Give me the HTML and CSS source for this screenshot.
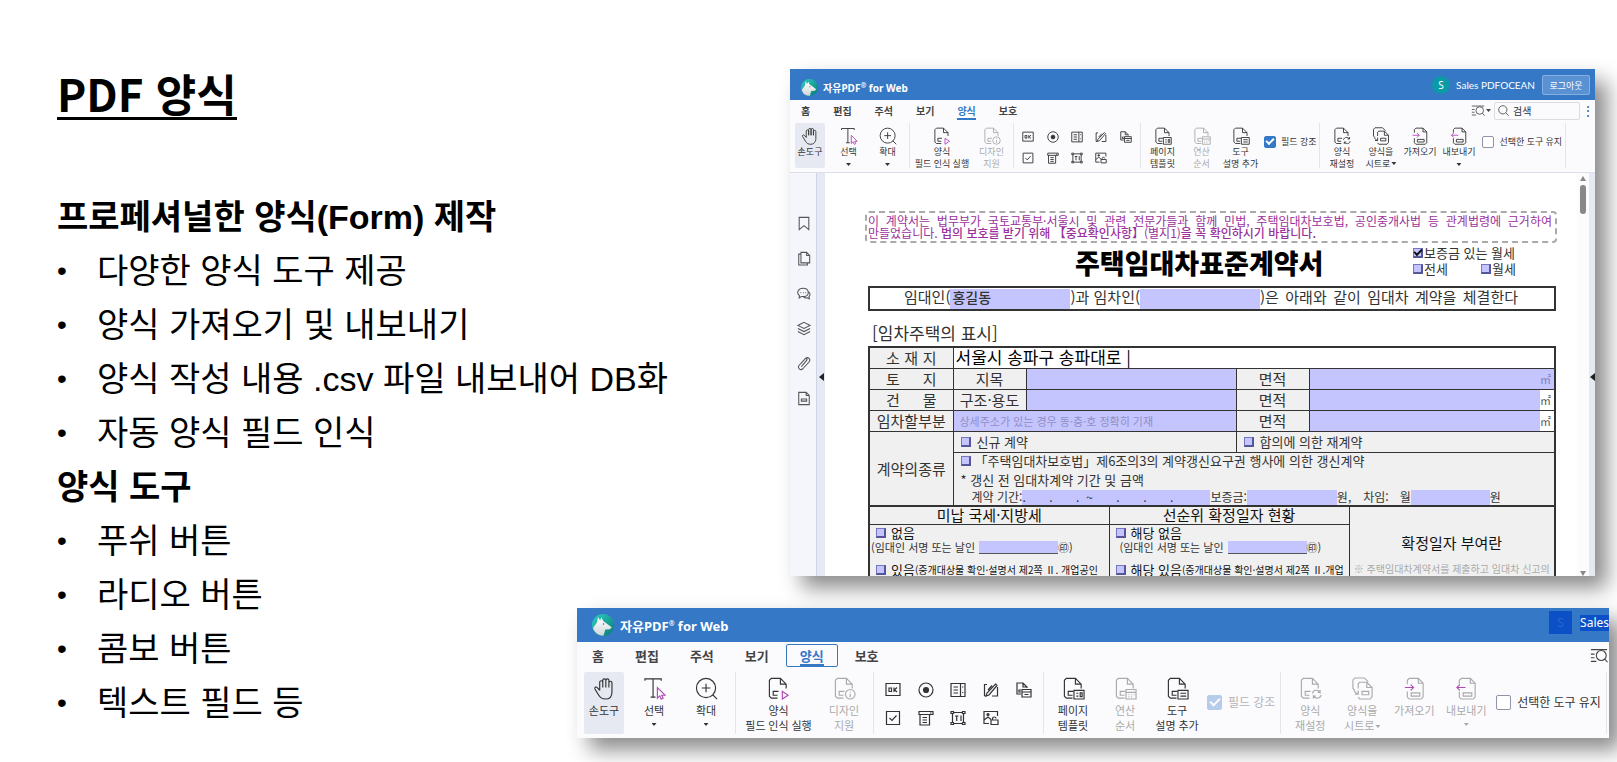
FILE: index.html
```html
<!DOCTYPE html>
<html lang="ko">
<head>
    <meta charset="UTF-8">
    <meta name="viewport" content="width=device-width, initial-scale=1.0">
    <title>PDF 양식</title>
    <link rel="stylesheet" href="styles.css">
</head>
<body>
    <!-- icon set -->
    <svg class="sprite" aria-hidden="true">
        <defs>
            <linearGradient id="teal" x1="0" y1="0" x2="1" y2="1">
                <stop offset="0" stop-color="#2fd0c4"/><stop offset="1" stop-color="#067a72"/>
            </linearGradient>
            <linearGradient id="fur" x1="0" y1="0" x2="0" y2="1">
                <stop offset="0" stop-color="#fff"/><stop offset="1" stop-color="#cfd6da"/>
            </linearGradient>
        </defs>
        <symbol id="logo" viewBox="0 0 24 24">
            <circle cx="12" cy="12" r="12" fill="url(#teal)"/>
            <path d="M6.500 3.500 9 7l1-3.500L12.500 8l3 2 6 4.500-2 2-5 .5-2 6.800A12 12 0 0 1 1 15.500L5.500 9z" fill="url(#fur)"/>
            <circle cx="12.500" cy="11" r=".8" fill="#456"/>
        </symbol>
        <symbol id="hand" viewBox="0 0 24 24"><path d="M7 14V5.500a1.600 1.600 0 0 1 3.200 0V11 3.500a1.600 1.600 0 0 1 3.200 0V11 3.500a1.600 1.600 0 0 1 3.200 0V11 6a1.600 1.600 0 0 1 3.200 0v9c0 5-2.500 8-6.800 8C9 23 7.500 21.500 6 19l-4-6.500c-.6-2 1.500-2.700 2.700-1.200L7 14"/></symbol>
        <symbol id="text-select" viewBox="0 0 24 24"><path d="M2 4V2h17v2M10.500 2v19M8 21h5"/><path class="pink" d="M15 11v11l2.500-2.300 1.500 3.500 2-1-1.500-3.200H23z"/></symbol>
        <symbol id="zoom" viewBox="0 0 24 24"><circle cx="11.500" cy="11.500" r="10"/><path d="M11.500 7v9M7 11.500h9M18.500 18.500 23 23"/></symbol>
        <symbol id="page" viewBox="0 0 24 24"><path d="M11 22H4.500L2.500 20V3.500l2-2H14l6 6V12M14 1.500V7.500h6M12 15H6.500v4H11"/></symbol>
        <symbol id="recog" viewBox="0 0 24 24"><use href="#page"/><path class="pink" d="M16 15v8l6-4z"/></symbol>
        <symbol id="design" viewBox="0 0 24 24"><use href="#page"/><circle cx="18" cy="18" r="5"/><path d="M18 17.500v3.500M18 15v1"/></symbol>
        <symbol id="template" viewBox="0 0 24 24"><use href="#page"/><path d="M12.500 14H23v9H12.500zM15 17h2M15 20h2M19 16.500h2v4h-2z"/></symbol>
        <symbol id="order" viewBox="0 0 24 24"><use href="#page"/><path d="M12.500 13H23v10H12.500zM12.500 16H23M15 18.500h1M18 18.500h1M20.500 18.500h1M15 20.800h1M18 20.800h1"/></symbol>
        <symbol id="tip" viewBox="0 0 24 24"><use href="#page"/><path d="M12.500 14H23v9H12.500zM15 17h6M15 20h6"/></symbol>
        <symbol id="reset" viewBox="0 0 24 24"><use href="#page"/><path d="M14 17c1-4 6-4 8-1v-2.500M22 16h-2.500M23 19c-1 4-6 4-8 1v2.500M15 20h2.500"/></symbol>
        <symbol id="sheet" viewBox="0 0 24 24"><path d="M9 5.500h7.500L22 11v9.500L20 23H9l-1.500-2M7.500 12V7L9 5.500M16.500 5.500V11H22M4 14l-2-2V3l2-2h10l4 4M3 14c1 2 2 3 4.500 4M4 18h3.500v-4M11.500 15h7v3.500h-7z"/></symbol>
        <symbol id="import" viewBox="0 0 24 24"><path d="M4.500 7.500v-4l2-2H16l5 5V21l-2 2H6.500l-2-2v-6M16 1.500v5h5M8.500 16.500h9V20h-9z"/><path class="pink" d="M2 11h9M8 8l3 3-3 3"/></symbol>
        <symbol id="export" viewBox="0 0 24 24"><path d="M4.500 7.500v-4l2-2H16l5 5V21l-2 2H6.500l-2-2v-6M16 1.500v5h5M8.500 16.500h9V20h-9z"/><path class="pink" d="M2 11h9M5 8l-3 3 3 3"/></symbol>
        <symbol id="f-ok" viewBox="0 0 16 16"><path d="M1 1.500h14v12H1zM4 6h2.500v3.500H4zM9 5.500V10M12 5.500 9.500 7.700 12 10"/></symbol>
        <symbol id="f-radio" viewBox="0 0 16 16"><circle cx="8" cy="8" r="7"/><circle class="solid" cx="8" cy="8" r="2.500"/></symbol>
        <symbol id="f-list" viewBox="0 0 16 16"><path d="M1 1.500h14v13H1zM10.500 1.500v13M3.500 5H8M3.500 8H8M3.500 11H8M12.700 4.500v1M12.700 10v1"/></symbol>
        <symbol id="f-sign" viewBox="0 0 16 16"><path d="M4 2.500H1.500V14M1.500 14H3M12.500 2l1.500 1.500L6 13l-3 1 1-3zM14.500 5v9H9M9 3.500 5 8"/></symbol>
        <symbol id="f-date" viewBox="0 0 16 16"><path d="M5 12H1V1h6l4 4v1M7 1v4h4M5 8H3v2h2M6 7.500h9V15H6zM6 10h9M8.500 12.500h4"/></symbol>
        <symbol id="f-check" viewBox="0 0 16 16"><path d="M1.500 1.500h13v13h-13zM4.500 8l2.500 2.500 4.500-5"/></symbol>
        <symbol id="f-combo" viewBox="0 0 16 16"><path d="M1 1.500h14v3H1zM2 4.500V15h9.500V4.500M4.500 7.500H9M4.500 10H9M4.500 12.500H9M12 3h1.500"/></symbol>
        <symbol id="f-text" viewBox="0 0 16 16"><path d="M2.500 3.500v9M13.500 3.500v9M4 2.500h8M4 13.500h8M1 1.500h2.500v2H1zM12.500 1.500H15v2h-2.500zM1 12.500h2.500v2H1zM12.500 12.500H15v2h-2.500zM5 6h3.500M6.700 6v5M11 5.500V11"/></symbol>
        <symbol id="f-image" viewBox="0 0 16 16"><path d="M6 13.500H1v-12h13.500V6M1 10l4-3 3 2.500M8 14.500V10h7v4.500zM9.500 10V8.500c0-2 3.500-2 3.500 0"/><circle class="solid" cx="5" cy="4.500" r="1"/></symbol>
        <symbol id="find" viewBox="0 0 20 16"><path d="M1 1.500h18M1 6.500h4M1 10.500h4M1 14.500h6"/><circle cx="12.500" cy="8" r="5.500"/><path d="m16.500 12 3 3.500"/></symbol>
        <symbol id="lens" viewBox="0 0 16 16"><circle cx="7" cy="7" r="6"/><path d="m11.500 11.500 4 4"/></symbol>
        <symbol id="s-mark" viewBox="0 0 16 16"><path d="M2.500 1h11v14L8 10.500 2.500 15z"/></symbol>
        <symbol id="s-pages" viewBox="0 0 16 16"><path d="M4.500 1H11l3.500 3.500V13h-10zM11 1v3.500h3.500M4.500 3H2v12.500h10V13"/></symbol>
        <symbol id="s-chat" viewBox="0 0 16 16"><path d="M7 2c7 0 8 8 1.500 9.500H5L2.500 13l.3-2.500C-1 7.500 1 2 7 2zM13.500 6c2 2 1.500 4.500.2 5.500l.5 2.500-2.500-1.200c-1.500.5-3 .2-4.200-.8M4 7h.8M6.800 7h.8M9.600 7h.8"/></symbol>
        <symbol id="s-layers" viewBox="0 0 16 16"><path d="m8 1 7 3.500L8 8 1 4.500zM1 8l7 3.500L15 8M1 11.500 8 15l7-3.500"/></symbol>
        <symbol id="s-clip" viewBox="0 0 16 16"><path d="m5 11.500 6-7c1.500-1.500-.5-3-1.800-1.800L2.500 10c-2.500 3 1.500 6.500 4.200 4L14 6c2-3-1.500-6-4-4L4 8.500"/></symbol>
        <symbol id="s-form" viewBox="0 0 16 16"><path d="M2 1h8.500L14 4.500V15H2zM10.500 1v3.500H14M5 8.500h6V11H5z"/></symbol>
    </svg>

    <main class="slide">
        <section class="text">
            <h1>PDF 양식</h1>
            <h2>프로페셔널한 양식(Form) 제작</h2>
            <ul>
                <li>다양한 양식 도구 제공</li>
                <li>양식 가져오기 및 내보내기</li>
                <li>양식 작성 내용 .csv 파일 내보내어 DB화</li>
                <li>자동 양식 필드 인식</li>
            </ul>
            <h2>양식 도구</h2>
            <ul>
                <li>푸쉬 버튼</li>
                <li>라디오 버튼</li>
                <li>콤보 버튼</li>
                <li>텍스트 필드 등</li>
            </ul>
        </section>

        <!-- full editor window -->
        <section class="window editor">
            <header class="titlebar">
                <svg class="logo"><use href="#logo"/></svg>
                <span class="brand">자유PDF<sup>®</sup> for Web</span>
                <div class="account">
                    <span class="avatar">S</span>
                    <span class="user">Sales PDFOCEAN</span>
                    <button class="logout">로그아웃</button>
                </div>
            </header>
            <nav class="tabs">
                <button>홈</button>
                <button>편집</button>
                <button>주석</button>
                <button>보기</button>
                <button class="active">양식</button>
                <button>보호</button>
                <div class="finder">
                    <button class="find" aria-label="찾기"><svg><use href="#find"/></svg><i class="caret"></i></button>
                    <label class="search"><svg><use href="#lens"/></svg><input type="text" placeholder="검색" aria-label="검색"></label>
                    <button class="more" aria-label="더보기">⋮</button>
                </div>
            </nav>
            <div class="ribbon">
                <div class="group">
                    <button class="tool hand"><svg><use href="#hand"/></svg><span>손도구</span></button>
                    <button class="tool"><svg><use href="#text-select"/></svg><span>선택</span><i class="caret"></i></button>
                    <button class="tool"><svg><use href="#zoom"/></svg><span>확대</span><i class="caret"></i></button>
                </div>
                <div class="group">
                    <button class="tool wide"><svg><use href="#recog"/></svg><span>양식</span><span>필드 인식 실행</span></button>
                    <button class="tool" disabled><svg><use href="#design"/></svg><span>디자인</span><span>지원</span></button>
                </div>
                <div class="group">
                    <div class="fields">
                        <button aria-label="푸시 버튼"><svg><use href="#f-ok"/></svg></button>
                        <button aria-label="라디오 버튼"><svg><use href="#f-radio"/></svg></button>
                        <button aria-label="목록 상자"><svg><use href="#f-list"/></svg></button>
                        <button aria-label="서명"><svg><use href="#f-sign"/></svg></button>
                        <button aria-label="날짜"><svg><use href="#f-date"/></svg></button>
                        <button aria-label="체크 상자"><svg><use href="#f-check"/></svg></button>
                        <button aria-label="콤보 상자"><svg><use href="#f-combo"/></svg></button>
                        <button aria-label="텍스트 필드"><svg><use href="#f-text"/></svg></button>
                        <button aria-label="이미지"><svg><use href="#f-image"/></svg></button>
                    </div>
                </div>
                <div class="group">
                    <button class="tool"><svg><use href="#template"/></svg><span>페이지</span><span>템플릿</span></button>
                    <button class="tool" disabled><svg><use href="#order"/></svg><span>연산</span><span>순서</span></button>
                    <button class="tool"><svg><use href="#tip"/></svg><span>도구</span><span>설명 추가</span></button>
                    <label class="option"><input type="checkbox" checked>필드 강조</label>
                </div>
                <div class="group">
                    <button class="tool"><svg><use href="#reset"/></svg><span>양식</span><span>재설정</span></button>
                    <button class="tool"><svg><use href="#sheet"/></svg><span>양식을</span><span>시트로<i class="caret"></i></span></button>
                    <button class="tool"><svg><use href="#import"/></svg><span>가져오기</span></button>
                    <button class="tool"><svg><use href="#export"/></svg><span>내보내기</span><i class="caret"></i></button>
                    <label class="option"><input type="checkbox">선택한 도구 유지</label>
                </div>
            </div>
            <div class="workspace">
                <aside class="sidebar">
                    <button aria-label="책갈피"><svg><use href="#s-mark"/></svg></button>
                    <button aria-label="페이지"><svg><use href="#s-pages"/></svg></button>
                    <button aria-label="주석"><svg><use href="#s-chat"/></svg></button>
                    <button aria-label="레이어"><svg><use href="#s-layers"/></svg></button>
                    <button aria-label="첨부"><svg><use href="#s-clip"/></svg></button>
                    <button aria-label="양식"><svg><use href="#s-form"/></svg></button>
                </aside>
                <div class="splitter"><i></i></div>
                <article class="paper">
                    <div class="notice">
                        <p class="fill">이 계약서는 법무부가 국토교통부·서울시 및 관련 전문가들과 함께 민법, 주택임대차보호법, 공인중개사법 등 관계법령에 근거하여</p>
                        <p>만들었습니다. <b>법의 보호를 받기 위해 【중요확인사항】</b>(별지1)<b>을 꼭 확인하시기 바랍니다.</b></p>
                    </div>
                    <div class="heading">
                        <h3>주택임대차표준계약서</h3>
                        <div class="kinds">
                            <label><input type="checkbox" checked>보증금 있는 월세</label>
                            <div>
                                <label><input type="checkbox">전세</label>
                                <label><input type="checkbox">월세</label>
                            </div>
                        </div>
                    </div>
                    <div class="parties">
                        <span>임대인(</span><input class="name" type="text" value="홍길동" aria-label="임대인">
                        <span>)과 임차인(</span><input class="name" type="text" aria-label="임차인">
                        <span class="fill">)은 아래와 같이 임대차 계약을 체결한다</span>
                    </div>
                    <h4>[임차주택의 표시]</h4>
                    <table class="house">
                        <colgroup><col class="c1"><col class="c2"><col><col class="c2"><col class="c5"></colgroup>
                        <tr>
                            <th class="fill spread">소 재 지</th>
                            <td class="white" colspan="4"><input class="address" type="text" value="서울시 송파구 송파대로 |" aria-label="소재지"></td>
                        </tr>
                        <tr>
                            <th class="fill spread">토 지</th>
                            <th>지목</th>
                            <td class="white"><input type="text" aria-label="지목"></td>
                            <th>면적</th>
                            <td><div class="area tinted"><input type="text" aria-label="토지 면적">㎡</div></td>
                        </tr>
                        <tr>
                            <th class="fill spread">건 물</th>
                            <th>구조·용도</th>
                            <td class="white"><input type="text" aria-label="구조·용도"></td>
                            <th>면적</th>
                            <td class="white"><div class="area"><input type="text" aria-label="건물 면적">㎡</div></td>
                        </tr>
                        <tr>
                            <th>임차할부분</th>
                            <td class="white" colspan="2"><input class="part" type="text" placeholder="상세주소가 있는 경우 동·층·호 정확히 기재" aria-label="임차할부분"></td>
                            <th>면적</th>
                            <td class="white"><div class="area"><input type="text" aria-label="임차 면적">㎡</div></td>
                        </tr>
                        <tr>
                            <th rowspan="2">계약의종류</th>
                            <td colspan="2"><label class="pick"><input type="checkbox">신규 계약</label></td>
                            <td colspan="2"><label class="pick"><input type="checkbox">합의에 의한 재계약</label></td>
                        </tr>
                        <tr>
                            <td colspan="4">
                                <div class="renewal">
                                    <label class="pick"><input type="checkbox">「주택임대차보호법」제6조의3의 계약갱신요구권 행사에 의한 갱신계약</label>
                                    <p>* 갱신 전 임대차계약 기간 및 금액</p>
                                    <div class="terms">
                                        <span>계약 기간:</span><input class="period" type="text" value=". &nbsp; &nbsp; &nbsp; . &nbsp; &nbsp; &nbsp; . &nbsp;~ &nbsp; &nbsp; &nbsp; . &nbsp; &nbsp; &nbsp; . &nbsp; &nbsp; &nbsp; ." aria-label="계약 기간">
                                        <span>보증금:</span><input class="deposit" type="text" aria-label="보증금">
                                        <span>원,</span><span class="rent">차임:</span><span class="month">월</span><input class="monthly" type="text" aria-label="차임"><span>원</span>
                                    </div>
                                </div>
                            </td>
                        </tr>
                    </table>
                    <table class="checks">
                        <colgroup><col class="c7"><col class="c7"><col></colgroup>
                        <tr>
                            <th>미납 국세·지방세</th>
                            <th>선순위 확정일자 현황</th>
                            <td class="office" rowspan="2">
                                <p class="office-title">확정일자 부여란</p>
                                <p>※ 주택임대차계약서를 제출하고 임대차 신고의</p>
                            </td>
                        </tr>
                        <tr>
                            <td class="status">
                                <label><input type="checkbox">없음</label>
                                <div class="sign"><span>(임대인 서명 또는 날인</span><input type="text" aria-label="임대인 서명"><span>㊞)</span></div>
                                <label><input type="checkbox">있음<small>(중개대상물 확인·설명서 제2쪽 Ⅱ. 개업공인</small></label>
                            </td>
                            <td class="status">
                                <label><input type="checkbox">해당 없음</label>
                                <div class="sign indent"><span>(임대인 서명 또는 날인</span><input type="text" aria-label="확정일자 서명"><span>㊞)</span></div>
                                <label><input type="checkbox">해당 있음<small>(중개대상물 확인·설명서 제2쪽 Ⅱ.개업</small></label>
                            </td>
                        </tr>
                    </table>
                </article>
                <div class="scrollbar"><i class="up"></i><i class="thumb"></i><i class="down"></i></div>
                <div class="splitter right"><i></i></div>
            </div>
        </section>

        <!-- toolbar close-up -->
        <section class="window closeup">
            <header class="titlebar">
                <svg class="logo"><use href="#logo"/></svg>
                <span class="brand">자유PDF<sup>®</sup> for Web</span>
                <div class="account">
                    <span class="avatar">S</span>
                    <span class="user">Sales</span>
                </div>
            </header>
            <nav class="tabs">
                <button>홈</button>
                <button>편집</button>
                <button>주석</button>
                <button>보기</button>
                <button class="active">양식</button>
                <button>보호</button>
                <div class="finder">
                    <button class="find" aria-label="찾기"><svg><use href="#find"/></svg></button>
                </div>
            </nav>
            <div class="ribbon">
                <div class="group">
                    <button class="tool hand"><svg><use href="#hand"/></svg><span>손도구</span></button>
                    <button class="tool"><svg><use href="#text-select"/></svg><span>선택</span><i class="caret"></i></button>
                    <button class="tool"><svg><use href="#zoom"/></svg><span>확대</span><i class="caret"></i></button>
                </div>
                <div class="group">
                    <button class="tool wide"><svg><use href="#recog"/></svg><span>양식</span><span>필드 인식 실행</span></button>
                    <button class="tool" disabled><svg><use href="#design"/></svg><span>디자인</span><span>지원</span></button>
                </div>
                <div class="group">
                    <div class="fields">
                        <button aria-label="푸시 버튼"><svg><use href="#f-ok"/></svg></button>
                        <button aria-label="라디오 버튼"><svg><use href="#f-radio"/></svg></button>
                        <button aria-label="목록 상자"><svg><use href="#f-list"/></svg></button>
                        <button aria-label="서명"><svg><use href="#f-sign"/></svg></button>
                        <button aria-label="날짜"><svg><use href="#f-date"/></svg></button>
                        <button aria-label="체크 상자"><svg><use href="#f-check"/></svg></button>
                        <button aria-label="콤보 상자"><svg><use href="#f-combo"/></svg></button>
                        <button aria-label="텍스트 필드"><svg><use href="#f-text"/></svg></button>
                        <button aria-label="이미지"><svg><use href="#f-image"/></svg></button>
                    </div>
                </div>
                <div class="group">
                    <button class="tool"><svg><use href="#template"/></svg><span>페이지</span><span>템플릿</span></button>
                    <button class="tool" disabled><svg><use href="#order"/></svg><span>연산</span><span>순서</span></button>
                    <button class="tool"><svg><use href="#tip"/></svg><span>도구</span><span>설명 추가</span></button>
                    <label class="option off"><input type="checkbox" checked disabled>필드 강조</label>
                </div>
                <div class="group">
                    <button class="tool" disabled><svg><use href="#reset"/></svg><span>양식</span><span>재설정</span></button>
                    <button class="tool" disabled><svg><use href="#sheet"/></svg><span>양식을</span><span>시트로<i class="caret"></i></span></button>
                    <button class="tool" disabled><svg><use href="#import"/></svg><span>가져오기</span></button>
                    <button class="tool" disabled><svg><use href="#export"/></svg><span>내보내기</span><i class="caret"></i></button>
                    <label class="option"><input type="checkbox">선택한 도구 유지</label>
                </div>
            </div>
        </section>
    </main>
</body>
</html>
```
FILE: styles.css
```css
* { box-sizing: border-box; }
body { margin: 0; background: #fff; color: #000; font-family: "Noto Sans", "Noto Sans CJK KR", sans-serif; overflow: hidden; }
h1, h2, h3, h4, p, ul { margin: 0; padding: 0; }
button { border: 0; padding: 0; background: none; color: inherit; font: inherit; white-space: nowrap; }
input { font: inherit; color: inherit; min-width: 0; }
svg { display: block; fill: none; stroke: currentColor; stroke-width: 1.2; overflow: visible; }
.sprite { position: absolute; width: 0; height: 0; }
.logo { stroke: none; }
.pink { stroke: #b04ab4; }
.solid { fill: currentColor; }

.slide {
    display: grid;
    grid-template-columns: 577px 213px 1fr;
    grid-template-rows: 507px auto;
    row-gap: 32px;
    min-height: 100vh;
    padding: 69px 8px 24px 0;
    align-items: start;
}

/* left text */
.text { grid-column: 1 / 3; grid-row: 1 / 3; padding: 1px 0 0 57px; font-family: "Liberation Sans", "Noto Sans CJK KR", sans-serif; font-size: 34px; line-height: 54px; }
.text h1 { display: inline-block; margin-bottom: 70px; border-bottom: 3px solid #000; font-family: "Noto Sans CJK KR", sans-serif; font-size: 44px; line-height: 47px; }
.text h2 { font-size: 34px; font-weight: bold; }
.text ul { list-style: none; }
.text li { display: flex; }
.text li::before { content: "•"; width: 40px; font-size: 28px; }

/* window frame, sized by the variables of each window */
.window { position: relative; background: #fbfbfe; color: #333; box-shadow: 12px 12px 20px rgba(0, 0, 0, .46); }
.editor {
    --bar: 31px; --logo: 17px; --brand: 10px; --tab: 10px; --tabs: 21px; --label: 9px; --option: 9px; --line: 12px;
    --icon: 18px; --tool: 39px; --wide: 60px; --hand: 30px; --tool-h: 45px; --gap: 2px; --fields: 122px; --field: 12px; --box: 12px;
    grid-column: 3; grid-row: 1; height: 507px; margin-right: 14px;
    display: flex; flex-direction: column;
}
.closeup {
    --bar: 34px; --logo: 22px; --brand: 13px; --tab: 13px; --tabs: 27px; --label: 11px; --option: 12px; --line: 15px;
    --icon: 23px; --tool: 52px; --wide: 79px; --hand: 40px; --tool-h: 62px; --gap: 3px; --fields: 163px; --field: 16px; --box: 15px;
    grid-column: 2 / 4; grid-row: 2;
}
.titlebar { display: flex; align-items: center; height: var(--bar); padding: 5px 5px 0 11px; background: #3578c6; color: #fff; }
.closeup .titlebar { padding: 0 0 0 15px; }
.logo { width: var(--logo); height: var(--logo); }
.brand { margin-left: 5px; font-size: var(--brand); font-weight: bold; white-space: nowrap; }
.closeup .brand { margin-left: 6px; }
.brand sup { font-size: 7px; line-height: 0; }
.account { display: flex; align-items: center; margin-left: auto; font-size: 10px; }
.editor .account { padding-bottom: 4px; }
.editor .user { font-family: Lato, sans-serif; }
.avatar { width: 18px; height: 18px; margin-right: 6px; border-radius: 50%; background: #0c9aa6; line-height: 18px; text-align: center; }
.logout { width: 48px; height: 20px; margin-left: 7px; border: 1px solid #86aede; border-radius: 2px; background: #5a91d2; font-size: 9px; }
.closeup .account { padding-bottom: 5px; font-size: 12px; }
.closeup .avatar { width: 23px; height: 23px; margin-right: 8px; border-radius: 0; background: #0b50c6; color: #2c63cf; line-height: 23px; }
.closeup .user { background: #0b50c6; line-height: 16px; }

.tabs { display: flex; align-items: center; gap: 3px; height: var(--tabs); padding-left: 1px; flex: none; color: #444; font-size: var(--tab); font-weight: bold; }
.tabs > button { position: relative; height: 20px; padding: 0 10px; }
.closeup .tabs > button { height: 23px; padding: 0 14px; }
.tabs .active { color: #3578c6; }
.closeup .tabs .active { outline: 1px solid #3578c6; outline-offset: -1px; border-radius: 2px; }
.tabs .active::after { content: ""; position: absolute; left: 10px; right: 10px; bottom: 1px; height: 2px; background: #3578c6; }
.closeup .tabs .active::after { left: 14px; right: 14px; }
.finder { display: flex; align-items: center; margin-left: auto; font-weight: normal; }
.find { display: flex; align-items: center; gap: 1px; margin-right: 3px; }
.find svg { width: 14px; height: 11px; }
.closeup .find { margin-right: 1px; }
.closeup .find svg { width: 18px; height: 15px; }
.search { display: flex; align-items: center; width: 86px; height: 18px; padding-left: 3px; border: 1px solid #dcdce2; border-radius: 2px; }
.search svg { width: 11px; height: 11px; }
.search input { width: 60px; padding: 0 0 0 4px; border: 0; background: none; outline: 0; }
.search input::placeholder { color: #333; opacity: 1; }
.more { width: 15px; font-size: 12px; line-height: 12px; }

.caret { display: inline-block; width: 5px; height: 3px; background: currentColor; clip-path: polygon(0 0, 100% 0, 50% 100%); }
span > .caret { margin: 0 0 2px 1px; }
.ribbon { display: flex; flex: none; padding: 2px 0 4px 5px; font-size: var(--label); line-height: var(--line); }
.closeup .ribbon { padding: 3px 0 4px 7px; overflow: hidden; }
.group { display: flex; padding: 0 var(--gap); border-right: 1px solid #e4e5ec; }
.group:first-child { padding-left: 0; }
.tool { display: flex; flex-direction: column; align-items: center; width: var(--tool); height: var(--tool-h); padding-top: 4px; line-height: var(--line); flex: none; }
.tool svg { width: var(--icon); height: var(--icon); margin-bottom: 1px; flex: none; }
.closeup .tool { padding-top: 5px; }
.closeup .tool svg { margin-bottom: 3px; }
.tool > .caret { margin-top: 5px; }
.tool.wide { width: var(--wide); }
.tool.hand { width: var(--hand); margin-right: 4px; border-radius: 2px; background: #e6e9f1; }
.tool:disabled { color: #aaa; }
.tool:disabled .pink { stroke: #d9a0db; }
.fields { display: grid; grid-template-columns: repeat(5, 1fr); align-content: start; width: var(--fields); padding-top: 3px; }
.fields button { display: flex; align-items: center; justify-content: center; height: 21px; }
.closeup .fields { padding-top: 4px; }
.closeup .fields button { height: 28px; }
.fields svg { width: var(--field); height: var(--field); }
.option { display: flex; align-items: center; gap: 5px; padding: 0 1px 0 4px; font-size: var(--option); white-space: nowrap; }
.editor .option { padding-bottom: 8px; }
.closeup .option { padding: 0 2px 1px 4px; gap: 6px; }
.option input { appearance: none; width: var(--box); height: var(--box); margin: 0; border: 1px solid #8f94a8; border-radius: 2px; background: #fff; flex: none; }
.option input:checked { display: flex; align-items: center; justify-content: center; border-color: #3578c6; background: #3578c6; }
.option input:checked::after { content: ""; width: 60%; height: 30%; margin-bottom: 20%; border: solid #fff; border-width: 0 0 2px 2px; transform: rotate(-45deg); }
.option.off { color: #b4b4b8; }
.option.off input { opacity: .35; }

/* document area */
.workspace { display: flex; flex: 1; min-height: 0; border-top: 1px solid #dcdfea; background: #fff; }
.sidebar { display: flex; flex-direction: column; width: 26px; padding: 33px 0 0 2px; background: #f5f6fb; color: #555; flex: none; }
.sidebar button { display: flex; align-items: center; justify-content: center; height: 35px; flex: none; }
.sidebar svg { width: 14px; height: 15px; }
.splitter { width: 9px; padding: 200px 0 0 2px; border-left: 1px solid #cfd5e6; background: #e5e9f2; flex: none; }
.splitter i { display: block; width: 5px; height: 8px; background: #222; clip-path: polygon(100% 0, 100% 100%, 0 50%); }
.splitter.right { width: 6px; padding-left: 1px; border: 0; }
.scrollbar { display: flex; flex-direction: column; align-items: center; width: 12px; padding: 3px 0 0; background: #fcfcfc; flex: none; }
.scrollbar i { width: 6px; background: #888; flex: none; }
.scrollbar .up { height: 5px; clip-path: polygon(50% 0, 100% 100%, 0 100%); }
.scrollbar .thumb { height: 29px; margin: 4px 0 auto; border-radius: 3px; }
.scrollbar .down { height: 5px; clip-path: polygon(0 0, 100% 0, 50% 100%); }

.paper { flex: 1; min-width: 0; overflow: hidden; padding: 38px 21px 0 43px; font-family: "Noto Sans CJK KR", sans-serif; font-size: 13px; line-height: 16px; color: #333; white-space: nowrap; }
.paper input[type="text"] { display: block; padding: 0; border: 0; border-radius: 0; background: #c4c4ff; outline: 0; }
.paper input[type="checkbox"] { appearance: none; width: 10px; height: 10px; margin: 0; border: 1px solid #7575c0; border-right: 2px solid #55559c; border-bottom: 2px solid #55559c; background: #c4c4ff; flex: none; }
.paper label { display: flex; align-items: center; }
.fill { text-align: justify; text-align-last: justify; white-space: normal; }
.notice { margin: 0 -1px 0 -3px; padding: 2px 3px 2px 1px; border: 2px dashed #aaa; border-radius: 4px; color: #9a309c; font-size: 12px; line-height: 12px; }
.notice b { font-weight: 500; }
.heading { display: flex; align-items: center; height: 39px; padding-left: 207px; }
.heading h3 { font-size: 27px; font-weight: 900; line-height: 38px; color: #000; }
.kinds { width: 103px; margin: 0 40px 4px auto; }
.kinds > div { display: flex; justify-content: space-between; }
.kinds label { gap: 1px; }
.kinds input:checked::after { content: ""; display: block; width: 6px; height: 3px; border: solid #111; border-width: 0 0 2px 2px; transform: rotate(-45deg); }
.parties { display: flex; align-items: center; height: 25px; margin-top: 4px; padding: 0 36px 0 34px; border: 2px solid #333; font-size: 15px; line-height: 18px; }
.parties span { padding-bottom: 3px; }
.paper .parties .name { width: 120px; height: 20px; padding: 0 0 3px 2px; font-weight: 500; font-size: 14px; }
.parties .fill { flex: 1; }
.paper h4 { margin: 10px 0 1px 4px; font-size: 17px; font-weight: 400; line-height: 24px; }

.paper table { width: 100%; table-layout: fixed; border-collapse: collapse; background: #f0f0f0; border: 2px solid #333; }
.paper th, .paper td { height: 21px; padding: 0; border: 1px solid #333; font-weight: 400; text-align: left; }
.paper th { font-size: 15px; line-height: 18px; text-align: center; }
.paper th.spread { padding: 0 16px; text-align: justify; }
.paper .white { background: #fff; }
.c1 { width: 84px; }
.c2 { width: 73px; }
.c5 { width: 246px; }
.c7 { width: 240px; }
.paper .house td > input[type="text"] { width: 100%; height: 20px; }
.paper .house td > .address { padding: 0 0 3px 2px; background: #fff; color: #000; font-size: 17px; }
.paper .house td > .part { padding-left: 6px; font-size: 11px; }
.part::placeholder { color: #8f8fc4; opacity: 1; }
.area { display: flex; align-items: center; padding-right: 3px; font-size: 11px; color: #555; }
.area input { flex: 1; height: 20px; }
.tinted { background: #c4c4ff; color: #7c7cb8; }
.pick { gap: 6px; padding-left: 7px; }
.renewal { height: 52px; }
.renewal .pick { gap: 4px; }
.renewal p { padding: 3px 0 1px 7px; }
.terms { display: flex; align-items: center; padding-left: 18px; font-size: 12px; }
.terms input { height: 15px; }
.terms .period { width: 188px; padding-left: 25px; }
.terms .deposit { width: 90px; }
.terms .monthly { width: 79px; }
.terms .rent { margin-left: 12px; }
.terms .month { margin-left: 11px; }
.paper .checks { border-top: 0; }
.paper .checks tr:first-child > * { border-top: 0; }
.paper .checks th { height: 17px; padding-bottom: 1px; color: #111; line-height: 16px; }
.paper .status { height: 70px; padding: 0 0 0 6px; vertical-align: top; overflow: hidden; }
.status label { gap: 5px; height: 15px; color: #111; }
.status small { margin-left: -5px; font-size: 11px; }
.status:nth-child(1) small, .status:nth-child(2) small { font-size: 10px; }
.sign { display: flex; align-items: center; height: 14px; margin: 0 0 8px -5px; font-size: 11px; }
.sign.indent { margin-left: 4px; }
.paper .sign input { width: 79px; height: 13px; margin-left: 4px; border-bottom: 1px solid #555; }
.paper .office { padding: 26px 0 0; text-align: center; vertical-align: top; color: #aaa; font-size: 10px; }
.office-title { margin-bottom: 8px; color: #111; font-size: 15px; line-height: 20px; }
```
